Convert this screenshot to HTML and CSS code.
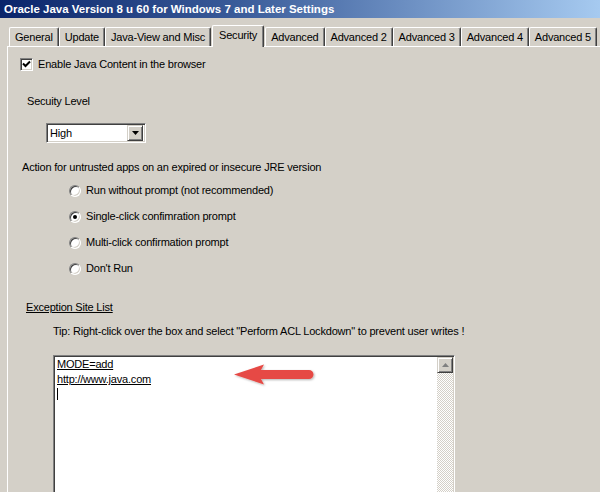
FILE: index.html
```html
<!DOCTYPE html>
<html>
<head>
<meta charset="utf-8">
<link rel="stylesheet" href="styles.css">
</head>
<body>
<div class="titlebar">Oracle Java Version 8 u 60 for Windows 7 and Later Settings</div>
<div class="tabs">
  <div class="tab">General</div>
  <div class="tab">Update</div>
  <div class="tab">Java-View and Misc</div>
  <div class="tab active">Security</div>
  <div class="tab">Advanced</div>
  <div class="tab">Advanced 2</div>
  <div class="tab">Advanced 3</div>
  <div class="tab">Advanced 4</div>
  <div class="tab">Advanced 5</div>
</div>
<div class="panel">
  <label class="check-row">
    <span class="checkbox"><svg width="9" height="9" viewBox="0 0 9 9"><path d="M1 3.5 L3.5 6 L8 1.5" fill="none" stroke="#000" stroke-width="2"/></svg></span>
    <span>Enable Java Content in the browser</span>
  </label>
  <div class="level-label">Secuity Level</div>
  <div class="select">
    <span class="select-value">High</span>
    <span class="drop-btn"><svg width="7" height="4" viewBox="0 0 7 4"><path d="M0 0 H7 L3.5 4 Z" fill="#000"/></svg></span>
  </div>
  <div class="action-label">Action for untrusted apps on an expired or insecure JRE version</div>
  <div class="radios">
    <div class="radio-row"><span class="radio"></span><span>Run without prompt (not recommended)</span></div>
    <div class="radio-row"><span class="radio checked"></span><span>Single-click confimration prompt</span></div>
    <div class="radio-row"><span class="radio"></span><span>Multi-click confirmation prompt</span></div>
    <div class="radio-row"><span class="radio"></span><span>Don't Run</span></div>
  </div>
  <div class="exception-label">Exception Site List</div>
  <div class="tip">Tip: Right-click over the box and select "Perform ACL Lockdown" to prevent user writes !</div>
  <div class="sitelist">
    <div class="sitelist-text">
      <div class="line">MODE=add</div>
      <div class="line">http://www.java.com</div>
      <div class="line"><span class="caret"></span></div>
    </div>
    <div class="scrollbar">
      <div class="scroll-btn"><svg width="7" height="4" viewBox="0 0 7 4"><path d="M3.5 0 L7 4 H0 Z" fill="#808080"/></svg></div>
      <div class="scroll-track"></div>
    </div>
    <svg class="arrow" width="84" height="24" viewBox="0 0 84 24">
      <defs>
        <filter id="sh" x="-10%" y="-30%" width="120%" height="160%">
          <feDropShadow dx="1" dy="1" stdDeviation="0.8" flood-color="#000" flood-opacity="0.3"/>
        </filter>
      </defs>
      <path d="M1 10.5 L31 0.5 L28 6 L76 6 A4.5 4.5 0 0 1 76 15 L28 15 L31 20.5 Z" fill="#e64a45" filter="url(#sh)"/>
    </svg>
  </div>
</div>
</body>
</html>
```

FILE: styles.css
```css
html, body {
  margin: 0;
  padding: 0;
  background: #d4d0c8;
  width: 600px;
  height: 492px;
  overflow: hidden;
  font-family: "Liberation Sans", Arial, sans-serif;
  font-size: 11px;
  letter-spacing: -0.2px;
  color: #000;
}

.titlebar {
  height: 18px;
  line-height: 18px;
  padding-left: 4px;
  background: linear-gradient(to right, #0a246a 0%, #3a5c9a 40%, #a6caf0 100%);
  color: #fff;
  font-weight: bold;
  font-size: 11.5px;
  letter-spacing: 0;
  white-space: nowrap;
}

.tabs {
  display: flex;
  align-items: flex-end;
  height: 21px;
  margin-top: 7px;
  padding-left: 9px;
  position: relative;
  z-index: 2;
  white-space: nowrap;
}

.tab {
  box-sizing: border-box;
  height: 19px;
  line-height: 18px;
  padding: 0 5px;
  border-left: 1px solid #fff;
  border-top: 1px solid #fff;
  border-right: 1px solid #404040;
  box-shadow: inset -1px 0 0 #808080;
  border-top-left-radius: 2px;
  border-top-right-radius: 2px;
  margin-right: 0;
  background: #d4d0c8;
}

.tab.active {
  height: 22px;
  line-height: 19px;
  margin-bottom: -1px;
  padding: 0 6px;
  margin: 0 1px -1px 1px;
}

.panel {
  position: relative;
  z-index: 1;
  margin-left: 7px;
  border-top: 1px solid #fff;
  border-left: 1px solid #fff;
  height: 460px;
  display: flex;
  flex-direction: column;
  align-items: flex-start;
  line-height: 13px;
}

.check-row {
  display: flex;
  align-items: center;
  gap: 5px;
  margin-top: 11px;
  margin-left: 12px;
  height: 13px;
}

.checkbox {
  box-sizing: border-box;
  width: 13px;
  height: 13px;
  background: #fff;
  border: 1px solid;
  border-color: #808080 #fff #fff #808080;
  box-shadow: inset 1px 1px 0 #404040, inset -1px -1px 0 #d4d0c8;
  display: flex;
  align-items: center;
  justify-content: center;
}

.checkbox svg {
  display: block;
}

.level-label {
  margin-top: 24px;
  margin-left: 19px;
}

.select {
  box-sizing: border-box;
  margin-top: 15px;
  margin-left: 38px;
  width: 100px;
  height: 20px;
  background: #fff;
  border: 1px solid;
  border-color: #808080 #fff #fff #808080;
  box-shadow: inset 1px 1px 0 #404040, inset -1px -1px 0 #d4d0c8;
  display: flex;
  align-items: center;
  justify-content: space-between;
  padding: 2px 2px 2px 3px;
}

.select-value {
  line-height: 14px;
}

.drop-btn {
  box-sizing: border-box;
  width: 16px;
  height: 16px;
  background: #d4d0c8;
  border: 1px solid;
  border-color: #d4d0c8 #404040 #404040 #d4d0c8;
  box-shadow: inset 1px 1px 0 #fff, inset -1px -1px 0 #808080;
  display: flex;
  align-items: center;
  justify-content: center;
}

.drop-btn svg {
  display: block;
}

.action-label {
  margin-top: 18px;
  margin-left: 14px;
}

.radios {
  display: flex;
  flex-direction: column;
  gap: 13px;
  margin-top: 10px;
  margin-left: 61px;
}

.radio-row {
  display: flex;
  align-items: center;
  gap: 5px;
  height: 13px;
}

.radio {
  box-sizing: border-box;
  width: 12px;
  height: 12px;
  border-radius: 50%;
  background: #fff;
  border: 1px solid;
  border-color: #808080 #fff #fff #808080;
  box-shadow: inset 1px 1px 0 #404040, inset -1px -1px 0 #d4d0c8;
  display: flex;
  align-items: center;
  justify-content: center;
}

.radio.checked::after {
  content: "";
  width: 4px;
  height: 4px;
  border-radius: 50%;
  background: #000;
}

.exception-label {
  margin-top: 26px;
  margin-left: 18px;
  text-decoration: underline;
}

.tip {
  margin-top: 11px;
  margin-left: 45px;
  white-space: nowrap;
}

.sitelist {
  position: relative;
  box-sizing: border-box;
  margin-top: 17px;
  margin-left: 45px;
  width: 402px;
  height: 160px;
  background: #fff;
  border: 1px solid;
  border-color: #808080 #fff #fff #808080;
  box-shadow: inset 1px 1px 0 #404040, inset -1px -1px 0 #d4d0c8;
  padding: 1px;
  display: flex;
}

.sitelist-text {
  flex: 1;
  padding-left: 2px;
  line-height: 15px;
}

.line {
  height: 15px;
  text-decoration: underline;
}

.caret {
  display: inline-block;
  width: 1px;
  height: 12px;
  background: #000;
  vertical-align: -2px;
}

.scrollbar {
  width: 16px;
  display: flex;
  flex-direction: column;
}

.scroll-btn {
  box-sizing: border-box;
  width: 16px;
  height: 16px;
  background: #d4d0c8;
  border: 1px solid;
  border-color: #d4d0c8 #404040 #404040 #d4d0c8;
  box-shadow: inset 1px 1px 0 #fff, inset -1px -1px 0 #808080;
  display: flex;
  align-items: center;
  justify-content: center;
}

.scroll-btn svg {
  display: block;
}

.scroll-track {
  flex: 1;
  background-image: conic-gradient(#fff 25%, #d4d0c8 0 50%, #fff 0 75%, #d4d0c8 0);
  background-size: 2px 2px;
}

.arrow {
  position: absolute;
  left: 179px;
  top: 8px;
}
```
